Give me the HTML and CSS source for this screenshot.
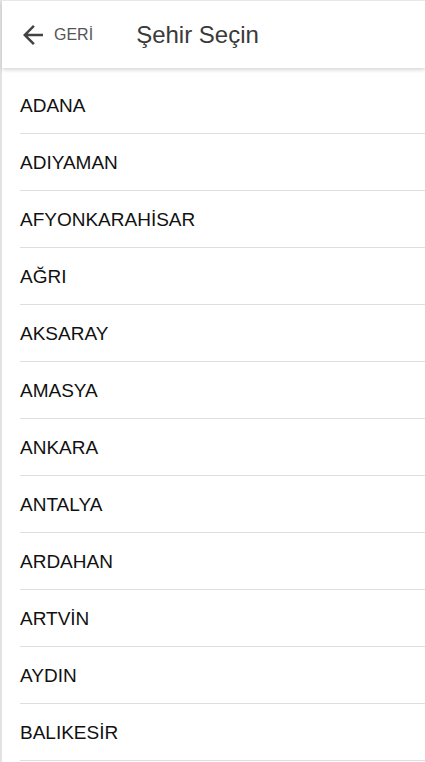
FILE: index.html
```html
<!DOCTYPE html>
<html lang="tr">
<head>
<meta charset="utf-8">
<link rel="stylesheet" href="styles.css">
</head>
<body>
<div class="page">
  <header class="toolbar">
    <button class="back">
      <svg class="back-icon" width="30" height="30" viewBox="0 0 24 24"><path d="M20 11H7.83l5.59-5.59L12 4l-8 8 8 8 1.41-1.41L7.83 13H20v-2z" fill="#424242"/></svg>
      <span class="back-text">GERİ</span>
    </button>
    <h1 class="title">Şehir Seçin</h1>
  </header>
  <ul class="list">
    <li class="item">ADANA</li>
    <li class="item">ADIYAMAN</li>
    <li class="item">AFYONKARAHİSAR</li>
    <li class="item">AĞRI</li>
    <li class="item">AKSARAY</li>
    <li class="item">AMASYA</li>
    <li class="item">ANKARA</li>
    <li class="item">ANTALYA</li>
    <li class="item">ARDAHAN</li>
    <li class="item">ARTVİN</li>
    <li class="item">AYDIN</li>
    <li class="item">BALIKESİR</li>
  </ul>
</div>
</body>
</html>
```
FILE: styles.css
```css
html, body {
  margin: 0;
  padding: 0;
  background: #fff;
  height: 100%;
  overflow: hidden;
}
body {
  font-family: "Liberation Sans", Arial, sans-serif;
}
.page {
  height: 100%;
  border-left: 2px solid #e2e2e2;
  border-top: 1px solid #ececec;
  box-sizing: border-box;
}
.toolbar {
  height: 67px;
  display: flex;
  align-items: center;
  background: #fff;
  box-shadow: 0 2px 4px rgba(0,0,0,0.16);
  position: relative;
  z-index: 2;
}
.back {
  display: flex;
  align-items: center;
  border: 0;
  background: transparent;
  padding: 0 0 0 16px;
  margin: 0;
  height: 100%;
  font: inherit;
}
.back-icon {
  display: block;
  margin-right: 6px;
}
.back-text {
  font-size: 16px;
  color: #555;
}
.title {
  margin: 0 0 0 43px;
  font-size: 24px;
  font-weight: 400;
  color: #3a3a3a;
}
.list {
  list-style: none;
  margin: 9px 0 0 0;
  padding: 0;
}
.item {
  margin-left: 18px;
  height: 56px;
  box-sizing: border-box;
  height: 57px;
  padding-top: 2px;
  border-bottom: 1px solid #dedede;
  display: flex;
  align-items: center;
  font-size: 19px;
  color: #111;
}
```
